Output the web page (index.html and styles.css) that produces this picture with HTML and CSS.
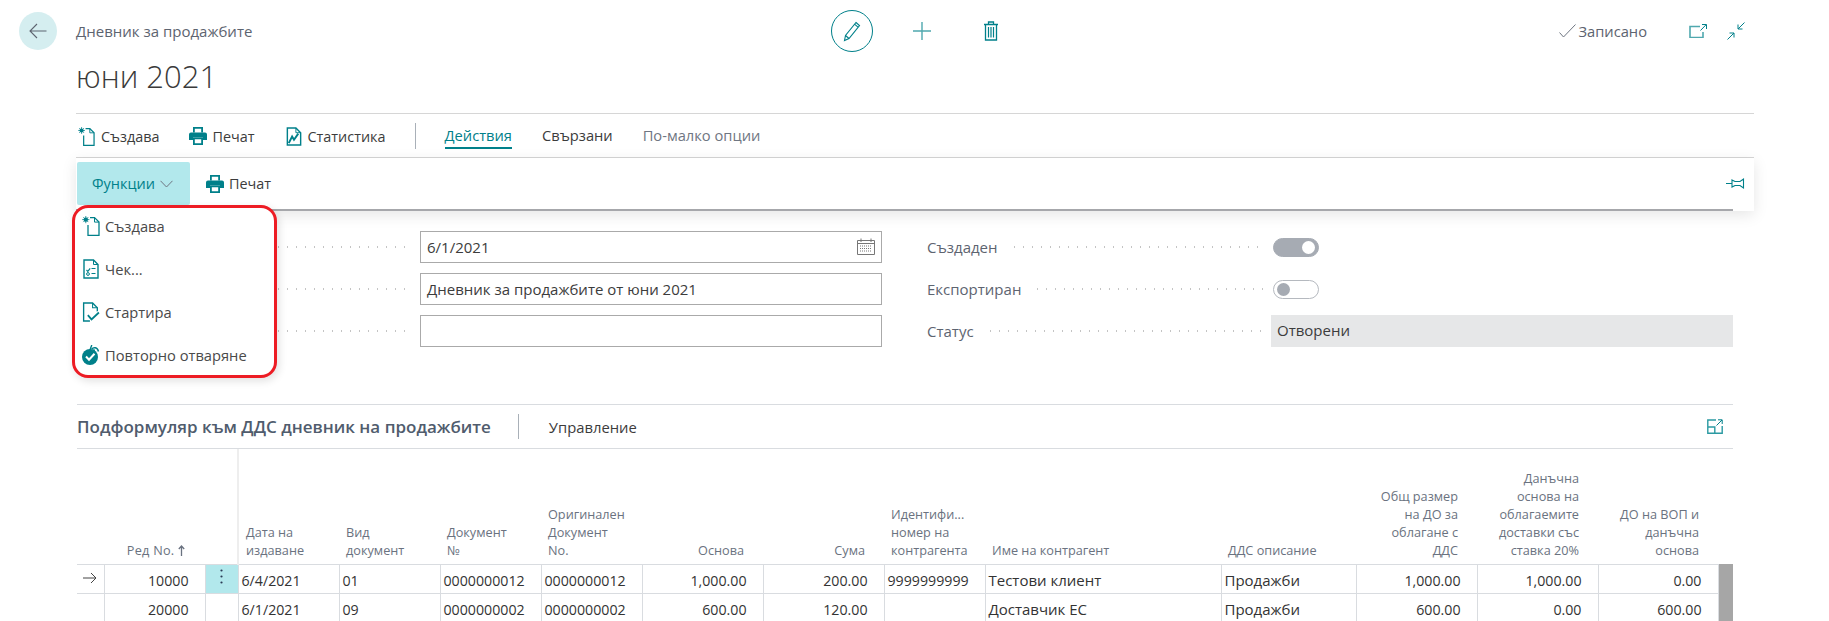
FILE: index.html
```html
<!DOCTYPE html>
<html lang="bg">
<head>
<meta charset="utf-8">
<title>Дневник за продажбите</title>
<link rel="stylesheet" href="styles.css">
</head>
<body>
<svg class="defs" width="0" height="0" aria-hidden="true">
  <defs>
    <symbol id="i-create" viewBox="0 0 18 20">
      <path d="M8 1.600H12.500L17 6.100V19.300H6V9" fill="none" stroke="currentColor" stroke-width="1.300"/>
      <path d="M12.500 1.600V6.100H17" fill="none" stroke="currentColor" stroke-width="1"/>
      <circle cx="3.800" cy="3.600" r="2.200" fill="currentColor"/>
      <path d="M3.800 0v7.200M.2 3.600h7.200M1.300 1.100l5 5M6.300 1.100l-5 5" stroke="currentColor" stroke-width=".8"/>
    </symbol>
    <symbol id="i-print" viewBox="0 0 18 18">
      <path d="M4 0h10v5.500h-1.800V1.800H5.800V5.500H4z" fill="currentColor"/>
      <path d="M2 5.500h14A2 2 0 0 1 18 7.500V13h-4v-2.500H4V13H0V7.500a2 2 0 0 1 2-2z" fill="currentColor"/>
      <path d="M4 10.500h10V18H4zM5.800 12.300v3.900h6.400v-3.900z" fill="currentColor" fill-rule="evenodd"/>
    </symbol>
    <symbol id="i-stats" viewBox="0 0 16 20">
      <path d="M1 1h9l5 5v13H1z" fill="none" stroke="currentColor" stroke-width="1.500"/>
      <path d="M10 1v5h5" fill="none" stroke="currentColor" stroke-width="1"/>
      <path d="M2.500 17l3.500-7 2 3.500L12.500 7" fill="none" stroke="currentColor" stroke-width="2"/>
    </symbol>
    <symbol id="i-check" viewBox="0 0 16 20">
      <path d="M1 1h9.500L15 5.500V19H1z" fill="none" stroke="currentColor" stroke-width="1.400"/>
      <path d="M10.500 1v4.500H15" fill="none" stroke="currentColor" stroke-width="1"/>
      <path d="M3.500 11l1.300 1.300 2.400-3M8.500 9.500h4M8.500 14.500h4" fill="none" stroke="currentColor" stroke-width="1.200"/>
      <circle cx="5" cy="15" r="1.400" fill="none" stroke="currentColor" stroke-width="1"/>
    </symbol>
    <symbol id="i-release" viewBox="0 0 16 19">
      <path d="M7 18H1V1h8.500L14 5.500V9" fill="none" stroke="currentColor" stroke-width="1.300"/>
      <path d="M9.500 1v4.500H14" fill="none" stroke="currentColor" stroke-width="1"/>
      <path d="M5 12.500l3.500 4L15.500 10" fill="none" stroke="#fff" stroke-width="3.500"/>
      <path d="M5 12.500l3.500 4L15.500 10" fill="none" stroke="currentColor" stroke-width="1.700"/>
    </symbol>
    <symbol id="i-reopen" viewBox="0 0 18 20">
      <circle cx="8" cy="12" r="8" fill="currentColor"/>
      <path d="M4 11.500l3 3.200 5.500-6" fill="none" stroke="#fff" stroke-width="2"/>
      <path d="M9 4.500C11 1.500 15.500 1.500 16.500 6.500" fill="none" stroke="#fff" stroke-width="3.500"/>
      <path d="M9.500 4.200C11.500 1.800 15.500 2 16.500 6.500" fill="none" stroke="currentColor" stroke-width="1.500"/>
      <path d="M9.800 0l-1.800 4.800 5 .5" fill="none" stroke="currentColor" stroke-width="1.400"/>
    </symbol>
  </defs>
</svg>

<header class="top">
  <button class="back" aria-label="Назад">
    <svg width="18" height="16" viewBox="0 0 18 16"><path d="M17.500 8H1M8 1L1 8l7 7" fill="none" stroke="#5d6470" stroke-width="1.100"/></svg>
  </button>
  <div class="crumb">Дневник за продажбите</div>
  <div class="tools">
    <span class="edit">
      <svg width="20" height="22" viewBox="0 0 20 22"><path d="M14 2.500l3.500 3L7 18.500 2.500 20.500 3.500 15.500zM12.500 4.200l3.500 3M3.500 15.500l3.500 3" fill="none" stroke="#00808a" stroke-width="1.100"/></svg>
    </span>
    <svg class="plus" width="20" height="20" viewBox="0 0 20 20"><path d="M10 1v18M1 10h18" stroke="#4fa8ae" stroke-width="1.400"/></svg>
    <svg class="trash" width="16" height="20" viewBox="0 0 16 20"><path d="M1 3.500h14M5.500 3.500V1h5v2.500M2.500 3.500v15.500h11V3.500" fill="none" stroke="#00808a" stroke-width="1.300"/><path d="M5.500 6v10.500M8 6v10.500M10.500 6v10.500" stroke="#00808a" stroke-width="1.200"/></svg>
  </div>
  <div class="status">
    <svg width="17" height="14" viewBox="0 0 17 14"><path d="M.5 8.500L4.500 13 16.500 .5" fill="none" stroke="#6f7682" stroke-width="1"/></svg>
    <span class="saved">Записано</span>
    <svg class="popout" width="18" height="14" viewBox="0 0 18 14"><path d="M11 2.500H1V13.500H14V8" fill="none" stroke="#4fa8ae" stroke-width="1.600"/><path d="M11.500 6.500L17 .8M13 .5h4.500V5" fill="none" stroke="#00808a" stroke-width="1"/></svg>
    <svg width="18" height="18" viewBox="0 0 18 18"><path d="M17.500 .5L11 7M11 2.500V7h4.500M.5 17.500L7 11M2.500 11H7v4.500" fill="none" stroke="#00808a" stroke-width="1"/></svg>
  </div>
</header>

<h1 class="title">юни 2021</h1>

<main class="content">
  <nav class="actions">
    <a class="act act-create"><svg class="ico ico-wide" width="17" height="19"><use href="#i-create"/></svg>Създава</a>
    <a class="act act-print"><svg class="ico" width="18" height="18"><use href="#i-print"/></svg>Печат</a>
    <a class="act act-stats"><svg class="ico ico-wide" width="16" height="19"><use href="#i-stats"/></svg>Статистика</a>
    <span class="vsep"></span>
    <a class="tab tab-on">Действия</a>
    <a class="tab">Свързани</a>
    <a class="tab tab-muted">По-малко опции</a>
  </nav>

  <div class="bar">
    <button class="fn">Функции
      <svg width="13" height="8" viewBox="0 0 13 8"><path d="M.5 .8L6.500 7 12.500 .8" fill="none" stroke="#6f7682" stroke-width="1"/></svg>
    </button>
    <a class="act bar-print"><svg class="ico" width="18" height="18"><use href="#i-print"/></svg>Печат</a>
    <svg class="pin" width="19" height="13" viewBox="0 0 19 13"><path d="M0 6.500h6M6 3l3 1.500h5L17.500 2v9L14 8.500H9L6 10z" fill="none" stroke="#00808a" stroke-width="1.100"/></svg>
    <ul class="menu">
      <li class="mi"><svg class="mi-ico" width="18" height="20"><use href="#i-create"/></svg>Създава</li>
      <li class="mi"><svg class="mi-ico" width="18" height="20"><use href="#i-check"/></svg>Чек...</li>
      <li class="mi"><svg class="mi-ico" width="18" height="20"><use href="#i-release"/></svg>Стартира</li>
      <li class="mi"><svg class="mi-ico" width="18" height="20"><use href="#i-reopen"/></svg>Повторно отваряне</li>
    </ul>
  </div>

  <section class="form">
    <div class="col">
      <div class="row"><span class="dots"></span>
        <div class="box box-date">6/1/2021
          <svg width="18" height="17" viewBox="0 0 18 17"><path d="M.5 2.500h17v14H.5zM.5 5.500h17M4 .5v3.500M14 .5v3.500" fill="none" stroke="#777" stroke-width="1"/><path d="M3 8h12M3 10.500h12M3 13h12" stroke="#777" stroke-width="1.200" stroke-dasharray="1 1"/></svg>
        </div>
      </div>
      <div class="row"><span class="dots"></span><div class="box">Дневник за продажбите от юни 2021</div></div>
      <div class="row"><span class="dots"></span><div class="box"></div></div>
    </div>
    <div class="col">
      <div class="row"><span class="lbl">Създаден</span><span class="dots"></span>
        <div class="ctl"><span class="tog tog-on"><i class="knob"></i></span></div>
      </div>
      <div class="row"><span class="lbl">Експортиран</span><span class="dots"></span>
        <div class="ctl"><span class="tog"><i class="knob"></i></span></div>
      </div>
      <div class="row"><span class="lbl">Статус</span><span class="dots"></span>
        <div class="readonly">Отворени</div>
      </div>
    </div>
  </section>

  <section class="sub">
    <div class="sub-head">
      <h2 class="sub-title">Подформуляр към ДДС дневник на продажбите</h2>
      <span class="sub-sep"></span>
      <a class="sub-tab">Управление</a>
      <svg class="sub-exp" width="16" height="15" viewBox="0 0 16 15"><path d="M9 1H.8v13.200h14.400V7M.8 8h7v6" fill="none" stroke="#2b9aa2" stroke-width="1.400"/><path d="M9.500 6.500L15 1M11 .8h4.200V5" fill="none" stroke="#00808a" stroke-width="1"/></svg>
    </div>
    <table class="grid">
      <colgroup>
        <col class="c27"><col class="c101"><col class="c33"><col class="c101"><col class="c101"><col class="c101"><col class="c101"><col class="c121"><col class="c121"><col class="c101"><col class="c236"><col class="c135"><col class="c121"><col class="c121"><col class="c120"><col class="c15">
      </colgroup>
      <thead>
        <tr>
          <th></th>
          <th class="r rno">Ред No. <svg class="sort" width="7" height="11" viewBox="0 0 7 11"><path d="M3.500 11V1.500M.8 4l2.700-3 2.700 3" fill="none" stroke="#6a7280" stroke-width="1.300"/></svg></th>
          <th></th>
          <th class="first">Дата на<br>издаване</th>
          <th>Вид<br>документ</th>
          <th>Документ<br>№</th>
          <th>Оригинален<br>Документ<br>No.</th>
          <th class="r">Основа</th>
          <th class="r">Сума</th>
          <th>Идентифи...<br>номер на<br>контрагента</th>
          <th>Име на контрагент</th>
          <th>ДДС описание</th>
          <th class="r">Общ размер<br>на ДО за<br>облагане с<br>ДДС</th>
          <th class="r">Данъчна<br>основа на<br>облагаемите<br>доставки със<br>ставка 20%</th>
          <th class="r">ДО на ВОП и<br>данъчна<br>основа</th>
          <th></th>
        </tr>
      </thead>
      <tbody>
        <tr>
          <td class="arrow"><svg width="14" height="12" viewBox="0 0 14 12"><path d="M0 6h13M8 1l5 5-5 5" fill="none" stroke="#444" stroke-width="1"/></svg></td>
          <td class="n">10000</td>
          <td class="kebab"><svg width="3" height="15" viewBox="0 0 3 15"><circle cx="1.500" cy="1.500" r="1.100" fill="#2a3a55"/><circle cx="1.500" cy="7.500" r="1.100" fill="#2a3a55"/><circle cx="1.500" cy="13.500" r="1.100" fill="#2a3a55"/></svg></td>
          <td>6/4/2021</td><td>01</td><td>0000000012</td><td>0000000012</td>
          <td class="n">1,000.00</td><td class="n">200.00</td><td>9999999999</td><td class="t">Тестови клиент</td><td class="t">Продажби</td>
          <td class="n">1,000.00</td><td class="n">1,000.00</td><td class="n">0.00</td>
          <td class="scroll" rowspan="2"></td>
        </tr>
        <tr>
          <td></td>
          <td class="n">20000</td>
          <td></td>
          <td>6/1/2021</td><td>09</td><td>0000000002</td><td>0000000002</td>
          <td class="n">600.00</td><td class="n">120.00</td><td></td><td class="t">Доставчик ЕС</td><td class="t">Продажби</td>
          <td class="n">600.00</td><td class="n">0.00</td><td class="n">600.00</td>
        </tr>
      </tbody>
    </table>
  </section>
</main>
</body>
</html>
```

FILE: styles.css
```css
* { box-sizing: border-box; }
html, body { margin: 0; height: 621px; overflow: hidden; background: #fff; }
body { font-family: "Open Sans", "Noto Sans", sans-serif; font-size: 14.4px; color: #333; }
.defs { position: absolute; }

.top { display: flex; align-items: center; height: 62px; padding: 0 84px 0 19px; }
.back { width: 38px; height: 38px; margin: 0 19px 0 0; padding: 0; border: 0; border-radius: 50%; background: #d5eef0; display: flex; align-items: center; justify-content: center; }
.crumb { width: 755px; font-size: 15px; color: #5d6470; }
.tools { display: flex; align-items: center; }
.edit { width: 42px; height: 42px; border: 1px solid #00808a; border-radius: 50%; display: flex; align-items: center; justify-content: center; }
.plus { margin-left: 39px; }
.trash { margin-left: 51px; }
.status { margin-left: auto; display: flex; align-items: center; }
.saved { margin: 0 42px 0 3px; font-size: 14.7px; color: #5d6470; }
.popout { margin-right: 20px; }

.title { margin: 0 0 0 76px; height: 51px; font-size: 31px; line-height: 28px; font-weight: 300; color: #3a3a3a; }

.content { margin: 0 75px 0 76px; }
.actions { display: flex; align-items: center; height: 45px; padding-top: 1px; border-top: 1px solid #d6d6d6; border-bottom: 1px solid #d6d6d6; }
.act { display: flex; align-items: center; color: #3c3c3c; }
.ico { color: #00808a; margin-right: 5px; }
.ico-wide { margin-right: 6px; }
.act-create { margin-left: 2px; }
.act-print { margin-left: 30px; }
.act-stats { margin-left: 31px; }
.vsep { width: 1px; height: 26px; margin: 0 29px; background: #a9b0b8; }
.tab { font-size: 14.7px; color: #3c3c3c; margin-right: 30px; height: 26px; line-height: 25px; }
.tab-on { color: #00808a; border-bottom: 2px solid #00808a; }
.tab-muted { color: #6f7682; }

.bar { position: relative; display: flex; align-items: center; height: 53px; padding: 0 0 2px 1px; background: #fff linear-gradient(#a6a7ab, #a6a7ab) no-repeat left bottom / 1657px 2px; box-shadow: 0 4px 14px rgba(0, 0, 0, .10); }
.fn { display: flex; align-items: center; gap: 5px; width: 113px; height: 43px; margin-top: 0; padding: 0 0 0 15px; border: 0; border-radius: 2px; background: #b2e8ec; font: inherit; font-size: 14.5px; color: #00808a; }
.bar-print { margin-left: 16px; }
.pin { margin-left: auto; margin-right: 9px; }

.menu { position: absolute; z-index: 3; left: -4px; top: 47px; display: flex; flex-direction: column; gap: 5px; width: 205px; height: 173px; margin: 0; padding: 0; list-style: none; background: #fff; border: 3px solid #ed1c24; border-radius: 16px; box-shadow: 2px 3px 8px rgba(0, 0, 0, .12); }
.mi { display: flex; align-items: center; height: 38px; padding-bottom: 2px; color: #4a4a4a; font-size: 14.7px; }
.mi-ico { color: #00808a; margin: 0 5px 0 7px; flex: none; }

.form { display: grid; grid-template-columns: 806px 806px; column-gap: 45px; padding-top: 20px; }
.col { display: flex; flex-direction: column; gap: 10px; }
.row { display: flex; align-items: center; height: 32px; font-size: 15px; }
.lbl { color: #5d6470; margin-right: 12px; }
.dots { flex: 1; height: 2px; margin-right: 8px; background: radial-gradient(circle, #c4c4c4 0 1px, transparent 1px) 0 0 / 9px 2px repeat-x; }
.box { display: flex; align-items: center; justify-content: space-between; width: 462px; height: 32px; padding: 0 6px 1px; border: 1px solid #aaa; color: #3c3c3c; }
.box-date svg { display: block; }
.ctl { width: 462px; padding-left: 2px; }
.readonly { width: 462px; height: 32px; padding: 0 6px; line-height: 30px; background: #e6e7e8; color: #3c3c3c; }
.tog { display: block; position: relative; width: 46px; height: 19px; border: 1px solid #b5b9bf; border-radius: 10px; background: #fff; }
.knob { position: absolute; left: 3px; top: 2px; width: 13px; height: 13px; border-radius: 50%; background: #a6abb3; }
.tog-on { background: #a6abb3; border-color: #a6abb3; }
.tog-on .knob { left: auto; right: 3px; background: #fff; }

.sub { margin: 57px 0 0 1px; width: 1656px; }
.sub-head { display: flex; align-items: center; height: 45px; border-top: 1px solid #d9dce0; border-bottom: 1px solid #d9dce0; }
.sub-title { margin: 0; font-size: 17px; font-weight: 600; color: #505c6d; }
.sub-sep { width: 1px; height: 25px; margin: 0 30px 0 27px; background: #a9b0b8; }
.sub-tab { font-size: 14.8px; color: #3c3c3c; }
.sub-exp { margin-left: auto; margin-right: 10px; }

.grid { width: 1656px; table-layout: fixed; border-collapse: collapse; font-size: 14.2px; }
.c27 { width: 27px; } .c101 { width: 101px; } .c33 { width: 33px; } .c121 { width: 121px; } .c236 { width: 236px; } .c135 { width: 135px; } .c120 { width: 120px; } .c15 { width: 15px; }
.grid th { height: 115px; padding: 0 7px 5px; vertical-align: bottom; text-align: left; font-weight: 400; font-size: 12.7px; line-height: 18px; color: #6a7280; }
.grid th.r { text-align: right; padding-right: 19px; }
.grid th.rno { padding-right: 20px; letter-spacing: .25px; }
.grid th.first { border-left: 2px solid #eeeeee; }
.grid .sort { vertical-align: -1px; }
.grid td { height: 29px; padding: 3px 3px 0; white-space: nowrap; border: 1px solid #d9dce0; color: #333; }
.grid td:first-child { border-left: 0; }
.grid td.t { font-size: 15px; }
.grid td.n { text-align: right; padding-right: 16px; }
.grid td.arrow { text-align: center; padding: 0; }
.grid td.kebab { padding: 0; background: #b2e8ec; text-align: center; }
.grid td.scroll { background: #a6a6a6; border: 0; padding: 0; }
```
